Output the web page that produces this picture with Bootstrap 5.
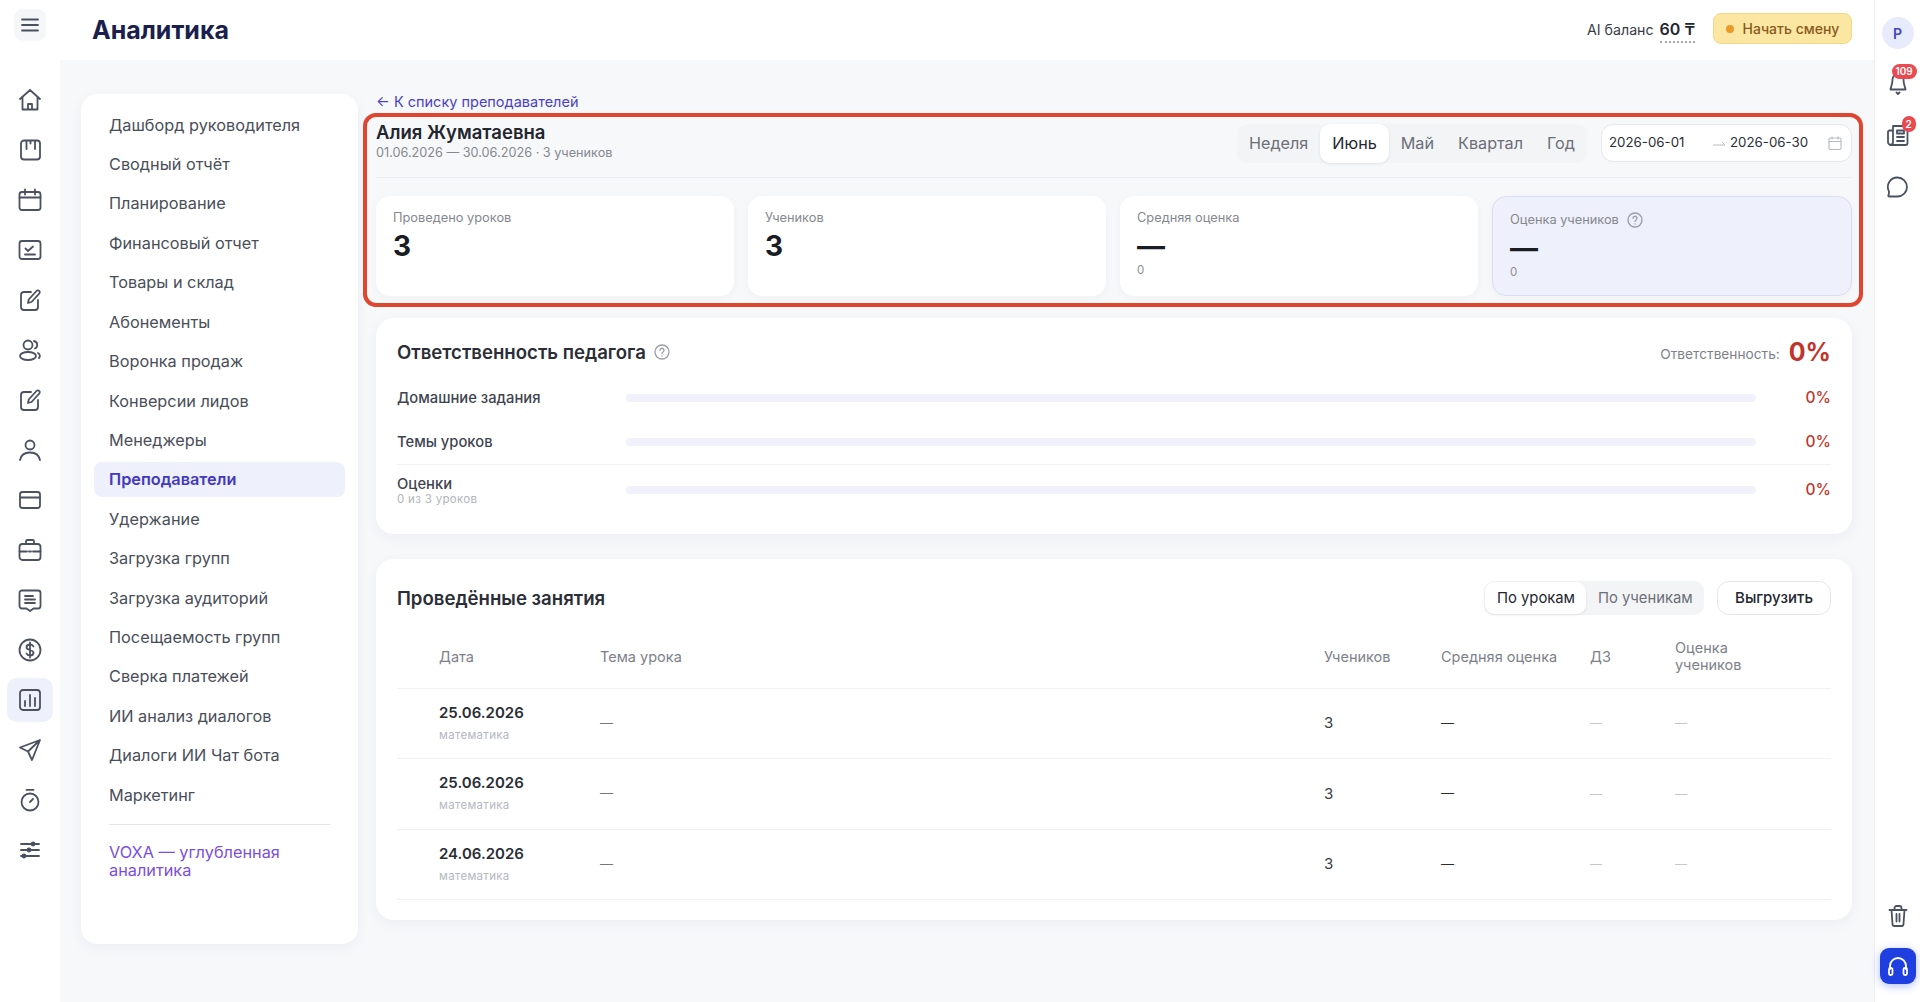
<!DOCTYPE html>
<html lang="ru">
<head>
  <meta charset="UTF-8">
  <meta name="viewport" content="width=device-width, initial-scale=1.0">
  <title>Аналитика</title>
  <link href="https://cdn.jsdelivr.net/npm/bootstrap@5.3.0/dist/css/bootstrap.min.css" rel="stylesheet">
  <style>
    html, body {
      height: 100%;
    }
    body {
      font-family: Inter, "Noto Sans", sans-serif;
      background: #fff;
      color: #23262f;
      overflow: hidden;
    }
    .app-shell {
      height: 1002px;
    }

    /* left rail */
    .rail-left {
      width: 60px;
      flex: none;
      background: #fff;
      padding-top: 10px;
    }
    .burger-box {
      width: 30px;
      height: 30px;
      background: #f5f6f8;
      border-radius: 8px;
      box-shadow: 0 0 2px rgba(30, 40, 70, .12);
    }
    .rail-nav {
      margin-top: 35px;
    }
    .rail-cell {
      width: 46px;
      height: 50px;
    }
    .rail-cell.is-on > span {
      background: #eef0fb;
      border-radius: 10px;
      width: 46px;
      height: 44px;
    }
    .rail-ico {
      width: 24px;
      height: 24px;
      fill: none;
      stroke: #4a5160;
      stroke-width: 1.8;
      stroke-linecap: round;
      stroke-linejoin: round;
    }

    /* header */
    .top-bar {
      height: 60px;
      flex: none;
      padding: 0 22px 0 32px;
    }
    .page-title {
      font-size: 25px;
      font-weight: 700;
      color: #1b1f4d;
      margin: 0;
    }
    .top-actions {
      margin-bottom: 3px;
    }
    .ai-balance {
      font-size: 14.2px;
      color: #3a3d46;
    }
    .ai-balance b {
      font-size: 16px;
      font-weight: 600;
      color: #23262f;
      border-bottom: 2px dotted #a5a8ae;
      padding-bottom: 2px;
      margin-left: 2px;
    }
    .shift-btn {
      height: 31px;
      width: 139px;
      margin-left: 18px;
      padding: 0;
      background: #fbe6a2;
      border: 1px solid #f2d88a;
      border-radius: 8px;
      color: #8a5a1c;
      font-size: 14px;
      font-weight: 500;
    }
    .shift-dot {
      width: 8px;
      height: 8px;
      border-radius: 50%;
      background: #eb9a2a;
      margin-right: 9px;
    }

    /* workspace */
    .work-area {
      background: #f7f8fa;
      min-height: 0;
    }
    .side-menu {
      width: 277px;
      height: 850px;
      flex: none;
      margin: 34px 18px 0 21px;
      padding: 13.4px 13px 13px;
      background: #fff;
      border-radius: 16px;
      box-shadow: 0 4px 14px rgba(30, 40, 70, .05);
    }
    .side-link {
      height: 35px;
      margin-bottom: 4.42px;
      padding: 0 15px;
      font-size: 16.3px;
      color: #4a4e58;
      border-radius: 8px;
      display: flex;
      align-items: center;
      text-decoration: none;
    }
    .side-link.is-on {
      background: #eef0fb;
      color: #4338c0;
      font-weight: 600;
    }
    .side-rule {
      margin: 12px 15px 19px;
      border-color: #e3e4e8;
      opacity: 1;
    }
    .side-extra {
      display: block;
      padding: 0 15px;
      font-size: 16.3px;
      line-height: 17.5px;
      color: #7a4fdb;
      text-decoration: none;
    }
    .main-col {
      width: 1476px;
      flex: none;
      padding-top: 33px;
    }
    .back-link {
      display: block;
      height: 18px;
      line-height: 18px;
      font-size: 14.5px;
      color: #4a42c4;
      text-decoration: none;
    }
    .focus-box {
      margin: 2px -11px 0 -13px;
      padding: 7px 7px 7px 9px;
      border: 4px solid #e0452f;
      border-radius: 13px;
    }
    .focus-head {
      padding-bottom: 14px;
      border-bottom: 1px solid #eceef1;
      height: 54px;
    }
    .teacher-name {
      font-size: 18.5px;
      line-height: 24px;
      font-weight: 600;
      color: #23262f;
      margin: -4px 0 0;
    }
    .teacher-sub {
      font-size: 12.7px;
      line-height: 16px;
      margin-top: 1px;
      color: #85888f;
    }
    .period-tabs {
      height: 39px;
      background: #f3f4f6;
      border-radius: 10px;
    }
    .period-tab {
      padding: 0 12px;
      font-size: 16.2px;
      line-height: 39px;
      color: #6b6f78;
    }
    .period-tab.is-on {
      background: #fff;
      color: #23262f;
      border-radius: 10px;
      box-shadow: 0 1px 3px rgba(30, 40, 70, .1);
    }
    .date-range {
      width: 251px;
      height: 38px;
      margin-left: 14px;
      padding: 0 7px;
      background: #fff;
      border: 1px solid #e6e7eb;
      border-radius: 12px;
      font-size: 13.3px;
      color: #2b2e36;
    }
    .date-from {
      width: 103px;
    }
    .date-to {
      width: 97px;
      margin-left: 4px;
    }
    .stat-row {
      margin-top: 18px;
      gap: 14px;
    }
    .stat-card {
      flex: 1 1 0;
      height: 100px;
      padding: 13px 17px;
      border: 0;
      border-radius: 14px;
      box-shadow: 0 2px 8px rgba(30, 40, 70, .04);
    }
    .stat-card.is-tinted {
      background: #eef0fb;
      border: 1px solid #dadef3;
      padding-top: 14px;
    }
    .stat-label {
      font-size: 12.8px;
      line-height: 17px;
      color: #85888f;
    }
    .stat-value {
      font-size: 28px;
      line-height: 34px;
      font-weight: 700;
      color: #1b1d26;
      margin-top: 3px;
    }
    .stat-note {
      font-size: 11.5px;
      line-height: 14px;
      color: #8c8f96;
    }
    .help-ico {
      width: 16px;
      height: 16px;
      fill: none;
      stroke: #9a9da5;
      stroke-width: 1.3;
      stroke-linecap: round;
    }
    .panel-card {
      border: 0;
      border-radius: 18px;
      background: #fff;
      box-shadow: 0 4px 14px rgba(30, 40, 70, .05);
      padding: 0 21px;
    }
    .duty-panel {
      height: 216px;
      margin-top: 11px;
      padding-top: 20px;
    }
    .panel-title {
      font-size: 18.6px;
      line-height: 28px;
      font-weight: 600;
      color: #2b2e36;
      margin: 0;
    }
    .duty-head {
      height: 38px;
    }
    .duty-total {
      font-size: 13.7px;
      color: #7e8189;
    }
    .duty-total span {
      margin-top: 5px;
    }
    .duty-total b {
      font-size: 25px;
      line-height: 28px;
      font-weight: 700;
      color: #c0362c;
      margin-left: 9px;
    }
    .duty-row {
      height: 44px;
    }
    .duty-row.is-last {
      height: 51px;
      border-top: 1px solid #f1f2f4;
    }
    .duty-label {
      width: 229px;
      flex: none;
      font-size: 14.75px;
      line-height: 18px;
      font-weight: 500;
      color: #3f4450;
    }
    .duty-label small {
      display: block;
      font-size: 11.5px;
      line-height: 13px;
      font-weight: 400;
      letter-spacing: .3px;
      color: #b2b5bc;
    }
    .duty-bar {
      height: 8px;
      background: #f0f1fb;
      flex: 1 1 0;
    }
    .duty-pct {
      width: 75px;
      flex: none;
      text-align: right;
      font-size: 15.5px;
      font-weight: 500;
      color: #c0362c;
    }
    .lessons-panel {
      height: 361px;
      margin-top: 25px;
      padding-top: 22px;
    }
    .mode-switch {
      height: 34px;
      width: 220px;
      padding: 1px;
      background: #f3f4f6;
      border-radius: 10px;
    }
    .mode-item {
      padding: 0 12px;
      font-size: 14.8px;
      line-height: 32px;
      color: #6b6f78;
      white-space: nowrap;
    }
    .mode-item.is-on {
      width: 101px;
      background: #fff;
      color: #23262f;
      border-radius: 9px;
      box-shadow: 0 1px 3px rgba(30, 40, 70, .1);
    }
    .export-btn {
      width: 114px;
      height: 34px;
      margin-left: 13px;
      padding: 0;
      background: #fff;
      border: 1px solid #e6e7eb;
      border-radius: 12px;
      font-size: 15px;
      font-weight: 500;
      color: #23262f;
    }
    .lesson-table {
      table-layout: fixed;
      margin: 12px 0 0;
      font-size: 15px;
    }
    .lesson-table col:nth-child(1) { width: 203px; }
    .lesson-table col:nth-child(3) { width: 117px; }
    .lesson-table col:nth-child(4) { width: 149px; }
    .lesson-table col:nth-child(5) { width: 85px; }
    .lesson-table col:nth-child(6) { width: 156px; }
    .lesson-table th {
      height: 61px;
      padding: 0 0 2px;
      vertical-align: middle;
      font-size: 14.5px;
      line-height: 17px;
      font-weight: 400;
      color: #7e8189;
      border-bottom: 1px solid #f1f2f4;
    }
    .lesson-table td {
      height: 70.5px;
      padding: 0;
      vertical-align: middle;
      color: #3a3d46;
      border-bottom: 1px solid #eff0f3;
    }
    .lesson-table th:first-child,
    .lesson-table td:first-child {
      padding-left: 42px;
    }
    .lesson-table th:last-child {
      padding-right: 70px;
    }
    .lesson-date {
      font-weight: 600;
      line-height: 20px;
      color: #2a2d36;
      margin-top: -1px;
    }
    .lesson-sub {
      font-size: 11.5px;
      line-height: 15px;
      margin-top: 5px;
      letter-spacing: .3px;
      color: #b5b8bf;
    }
    .lesson-table td.dash-soft { color: #73767e; font-size: 13px; }
    .lesson-table td.dash-dark { color: #2a2d36; font-size: 13px; }
    .lesson-table td.dash-pale { color: #c4c6cc; font-size: 12px; }

    /* right rail */
    .rail-right {
      width: 46px;
      flex: none;
      background: #fff;
      border-left: 1px solid #eceef1;
      padding: 17px 0 18px;
    }
    .avatar-dot {
      width: 32px;
      height: 32px;
      border-radius: 50%;
      background: #e8ebfb;
      color: #4045c4;
      font-size: 14px;
      font-weight: 600;
    }
    .right-cell {
      height: 24px;
      width: 24px;
      margin-top: 28px;
    }
    .right-cell.is-first {
      margin-top: 20px;
    }
    .right-cell.is-bottom {
      margin-top: auto;
    }
    .count-badge {
      top: -5.5px;
      left: 6px;
      padding: 0 4px;
      min-width: 14px;
      font-size: 10px;
      line-height: 15px;
      font-weight: 600;
      background: #ea4a4f;
      border-radius: 8px;
    }
    .count-badge.is-one {
      left: 16px;
      padding: 0 3px;
      line-height: 16px;
    }
    .help-desk {
      width: 36px;
      height: 36px;
      margin-top: 22px;
      background: #1f3fe0;
      border-radius: 9px;
      box-shadow: 0 2px 8px rgba(31, 63, 224, .35);
    }
  </style>
</head>
<body>
  <div class="app-shell d-flex">
    <!-- Left rail -->
    <aside class="rail-left d-flex flex-column align-items-center">
      <div class="burger-box d-flex align-items-center justify-content-center">
        <svg class="rail-ico" viewBox="0 0 24 24"><path d="M4 6.500h16M4 12h16M4 17.500h16"/></svg>
      </div>
      <nav class="rail-nav">
        <div class="rail-cell d-flex align-items-center justify-content-center"><svg class="rail-ico" viewBox="0 0 24 24"><path d="M2 11 12 2l10 9M4.500 9v12.500h15V9M10 21.500V16h4v5.500"/></svg></div>
        <div class="rail-cell d-flex align-items-center justify-content-center"><svg class="rail-ico" viewBox="0 0 24 24"><rect x="3" y="2.500" width="19" height="19" rx="3"/><path d="M8.500 3v8M12.500 3v2.500M17 3v8"/></svg></div>
        <div class="rail-cell d-flex align-items-center justify-content-center"><svg class="rail-ico" viewBox="0 0 24 24"><rect x="1.500" y="4" width="21" height="18" rx="2.500"/><path d="M1.500 9.500h21M7 1.500v5M17 1.500v5"/></svg></div>
        <div class="rail-cell d-flex align-items-center justify-content-center"><svg class="rail-ico" viewBox="0 0 24 24"><rect x="1.500" y="3" width="21" height="18" rx="2.500"/><path d="m7.500 10.500 2.500 2.500 5-4.500M7 16.500h10"/></svg></div>
        <div class="rail-cell d-flex align-items-center justify-content-center"><svg class="rail-ico" viewBox="0 0 24 24"><path d="M13 4H6a3 3 0 0 0-3 3v12a3 3 0 0 0 3 3h11a3 3 0 0 0 3-3v-7"/><path d="m10 15 .7-3.500L18.500 3a1.700 1.700 0 0 1 2.800 2.500L13.500 14z"/></svg></div>
        <div class="rail-cell d-flex align-items-center justify-content-center"><svg class="rail-ico" viewBox="0 0 24 24"><circle cx="10" cy="7" r="4.500"/><ellipse cx="10" cy="18" rx="8" ry="4"/><path d="M16 3a4 4 0 0 1 1 7.500M20 15c2 1 2.500 3.500 1 5"/></svg></div>
        <div class="rail-cell d-flex align-items-center justify-content-center"><svg class="rail-ico" viewBox="0 0 24 24"><path d="M13 4H6a3 3 0 0 0-3 3v12a3 3 0 0 0 3 3h11a3 3 0 0 0 3-3v-7"/><path d="m10 15 .7-3.500L18.500 3a1.700 1.700 0 0 1 2.800 2.500L13.500 14z"/></svg></div>
        <div class="rail-cell d-flex align-items-center justify-content-center"><svg class="rail-ico" viewBox="0 0 24 24"><circle cx="12" cy="7" r="4.500"/><path d="M2 22c1-5 5-7.500 10-7.500S21 17 22 22"/></svg></div>
        <div class="rail-cell d-flex align-items-center justify-content-center"><svg class="rail-ico" viewBox="0 0 24 24"><rect x="2" y="4" width="20" height="16" rx="2.500"/><path d="M2 9.500h20"/></svg></div>
        <div class="rail-cell d-flex align-items-center justify-content-center"><svg class="rail-ico" viewBox="0 0 24 24"><rect x="1.500" y="6" width="21" height="16" rx="3"/><path d="M8 6V3.500A1.500 1.500 0 0 1 9.500 2h5A1.500 1.500 0 0 1 16 3.500V6M1.500 13.500H9M15 13.500h7.500M11 13.500h2"/></svg></div>
        <div class="rail-cell d-flex align-items-center justify-content-center"><svg class="rail-ico" viewBox="0 0 24 24"><path d="M4 2.500h16A2.500 2.500 0 0 1 22.500 5v13a2.500 2.500 0 0 1-2.500 2.500h-4.500L12 23l-3.500-2.500H4A2.500 2.500 0 0 1 1.500 18V5A2.500 2.500 0 0 1 4 2.500z"/><path d="M7 8h8M7 11.500h10M7 15h10"/></svg></div>
        <div class="rail-cell d-flex align-items-center justify-content-center"><svg class="rail-ico" viewBox="0 0 24 24"><circle cx="12" cy="12" r="10.500"/><path d="M15.500 8.500c-.5-1.200-2-2-3.500-2-2 0-3.500 1-3.500 2.700 0 3.800 7 1.800 7 5.600 0 1.700-1.500 2.700-3.500 2.700-1.600 0-3-.8-3.500-2M12 4.500v15"/></svg></div>
        <div class="rail-cell is-on d-flex align-items-center"><span class="d-flex align-items-center justify-content-center"><svg class="rail-ico" viewBox="0 0 24 24"><rect x="2" y="2" width="20" height="20" rx="3"/><path d="M7 18v-5M12 18V7M17 18v-8"/></svg></span></div>
        <div class="rail-cell d-flex align-items-center justify-content-center"><svg class="rail-ico" viewBox="0 0 24 24"><path d="M22 2 2 9.500l8 4 4 8.500zM10 13.500 22 2"/></svg></div>
        <div class="rail-cell d-flex align-items-center justify-content-center"><svg class="rail-ico" viewBox="0 0 24 24"><circle cx="12" cy="14" r="8.500"/><path d="M8.500 1.800h7M12 14l3-3"/></svg></div>
        <div class="rail-cell d-flex align-items-center justify-content-center"><svg class="rail-ico" viewBox="0 0 24 24"><path d="M3 6h18M3 12h18M3 18h18"/><circle cx="15" cy="6" r="1.500" fill="#4a5160"/><circle cx="11" cy="12" r="1.500" fill="#4a5160"/><circle cx="6" cy="18" r="1.500" fill="#4a5160"/></svg></div>
      </nav>
    </aside>

    <div class="flex-grow-1 d-flex flex-column">
      <!-- Header -->
      <header class="top-bar d-flex align-items-center justify-content-between bg-white">
        <h1 class="page-title">Аналитика</h1>
        <div class="top-actions d-flex align-items-center">
          <span class="ai-balance">AI баланс <b>60 ₸</b></span>
          <button class="btn shift-btn d-flex align-items-center justify-content-center" type="button"><span class="shift-dot"></span>Начать смену</button>
        </div>
      </header>

      <!-- Workspace -->
      <div class="work-area flex-grow-1 d-flex">
        <nav class="side-menu">
          <a class="side-link" href="#">Дашборд руководителя</a>
          <a class="side-link" href="#">Сводный отчёт</a>
          <a class="side-link" href="#">Планирование</a>
          <a class="side-link" href="#">Финансовый отчет</a>
          <a class="side-link" href="#">Товары и склад</a>
          <a class="side-link" href="#">Абонементы</a>
          <a class="side-link" href="#">Воронка продаж</a>
          <a class="side-link" href="#">Конверсии лидов</a>
          <a class="side-link" href="#">Менеджеры</a>
          <a class="side-link is-on" href="#">Преподаватели</a>
          <a class="side-link" href="#">Удержание</a>
          <a class="side-link" href="#">Загрузка групп</a>
          <a class="side-link" href="#">Загрузка аудиторий</a>
          <a class="side-link" href="#">Посещаемость групп</a>
          <a class="side-link" href="#">Сверка платежей</a>
          <a class="side-link" href="#">ИИ анализ диалогов</a>
          <a class="side-link" href="#">Диалоги ИИ Чат бота</a>
          <a class="side-link" href="#">Маркетинг</a>
          <hr class="side-rule">
          <a class="side-extra" href="#">VOXA — углубленная аналитика</a>
        </nav>

        <main class="main-col">
          <a class="back-link" href="#">← К списку преподавателей</a>

          <section class="focus-box">
            <div class="focus-head d-flex justify-content-between align-items-start">
              <div>
                <h2 class="teacher-name">Алия Жуматаевна</h2>
                <div class="teacher-sub">01.06.2026 — 30.06.2026 · 3 учеников</div>
              </div>
              <div class="d-flex align-items-start">
                <div class="period-tabs d-flex">
                  <span class="period-tab">Неделя</span>
                  <span class="period-tab is-on">Июнь</span>
                  <span class="period-tab">Май</span>
                  <span class="period-tab">Квартал</span>
                  <span class="period-tab">Год</span>
                </div>
                <div class="date-range d-flex align-items-center">
                  <span class="date-from">2026-06-01</span>
                  <svg width="14" height="8" viewBox="0 0 14 8" fill="none" stroke="#b9bcc3" stroke-width="1"><path d="M1 6h12L10 3"/></svg>
                  <span class="date-to">2026-06-30</span>
                  <svg width="16" height="16" viewBox="0 0 16 16" fill="none" stroke="#b9bcc3" stroke-width="1.200"><rect x="2" y="3" width="12" height="11.500" rx="1.500"/><path d="M2 6.500h12M5 1.500v3M11 1.500v3"/></svg>
                </div>
              </div>
            </div>

            <div class="stat-row d-flex">
              <div class="card stat-card">
                <div class="stat-label">Проведено уроков</div>
                <div class="stat-value">3</div>
              </div>
              <div class="card stat-card">
                <div class="stat-label">Учеников</div>
                <div class="stat-value">3</div>
              </div>
              <div class="card stat-card">
                <div class="stat-label">Средняя оценка</div>
                <div class="stat-value">—</div>
                <div class="stat-note">0</div>
              </div>
              <div class="card stat-card is-tinted">
                <div class="stat-label d-flex align-items-center gap-2">Оценка учеников
                  <svg class="help-ico" viewBox="0 0 16 16"><circle cx="8" cy="8" r="7"/><path d="M6 6.300a2 2 0 1 1 3 1.700c-.7.400-1 .8-1 1.600M8 12v.100"/></svg>
                </div>
                <div class="stat-value">—</div>
                <div class="stat-note">0</div>
              </div>
            </div>
          </section>

          <section class="card panel-card duty-panel">
            <div class="duty-head d-flex justify-content-between align-items-start">
              <h3 class="panel-title d-flex align-items-center gap-2">Ответственность педагога
                <svg class="help-ico" viewBox="0 0 16 16"><circle cx="8" cy="8" r="7"/><path d="M6 6.300a2 2 0 1 1 3 1.700c-.7.400-1 .8-1 1.600M8 12v.100"/></svg>
              </h3>
              <div class="duty-total d-flex align-items-center"><span>Ответственность:</span> <b>0%</b></div>
            </div>
            <div class="duty-row d-flex align-items-center">
              <div class="duty-label">Домашние задания</div>
              <div class="progress duty-bar"></div>
              <div class="duty-pct">0%</div>
            </div>
            <div class="duty-row d-flex align-items-center">
              <div class="duty-label">Темы уроков</div>
              <div class="progress duty-bar"></div>
              <div class="duty-pct">0%</div>
            </div>
            <div class="duty-row is-last d-flex align-items-center">
              <div class="duty-label">Оценки<small>0 из 3 уроков</small></div>
              <div class="progress duty-bar"></div>
              <div class="duty-pct">0%</div>
            </div>
          </section>

          <section class="card panel-card lessons-panel">
            <div class="d-flex justify-content-between align-items-center">
              <h3 class="panel-title">Проведённые занятия</h3>
              <div class="d-flex">
                <div class="mode-switch d-flex">
                  <span class="mode-item is-on">По урокам</span>
                  <span class="mode-item">По ученикам</span>
                </div>
                <button class="btn export-btn" type="button">Выгрузить</button>
              </div>
            </div>
            <table class="table lesson-table">
              <colgroup><col><col><col><col><col><col></colgroup>
              <thead>
                <tr>
                  <th>Дата</th>
                  <th>Тема урока</th>
                  <th>Учеников</th>
                  <th>Средняя оценка</th>
                  <th>ДЗ</th>
                  <th>Оценка учеников</th>
                </tr>
              </thead>
              <tbody>
                <tr>
                  <td><div class="lesson-date">25.06.2026</div><div class="lesson-sub">математика</div></td>
                  <td class="dash-soft">—</td>
                  <td>3</td>
                  <td class="dash-dark">—</td>
                  <td class="dash-pale">—</td>
                  <td class="dash-pale">—</td>
                </tr>
                <tr>
                  <td><div class="lesson-date">25.06.2026</div><div class="lesson-sub">математика</div></td>
                  <td class="dash-soft">—</td>
                  <td>3</td>
                  <td class="dash-dark">—</td>
                  <td class="dash-pale">—</td>
                  <td class="dash-pale">—</td>
                </tr>
                <tr>
                  <td><div class="lesson-date">24.06.2026</div><div class="lesson-sub">математика</div></td>
                  <td class="dash-soft">—</td>
                  <td>3</td>
                  <td class="dash-dark">—</td>
                  <td class="dash-pale">—</td>
                  <td class="dash-pale">—</td>
                </tr>
              </tbody>
            </table>
          </section>
        </main>
      </div>
    </div>

    <!-- Right rail -->
    <aside class="rail-right d-flex flex-column align-items-center">
      <div class="avatar-dot d-flex align-items-center justify-content-center">P</div>
      <div class="right-cell is-first position-relative">
        <svg class="rail-ico" viewBox="0 0 24 24"><path d="M12 3a5.500 5.500 0 0 0-5.500 5.500c0 6-2 8-2 10h15c0-2-2-4-2-10A5.500 5.500 0 0 0 12 3zM10.500 21.500l1.500 1.500 1.500-1.500"/></svg>
        <span class="badge count-badge position-absolute">109</span>
      </div>
      <div class="right-cell position-relative">
        <svg class="rail-ico" viewBox="0 0 24 24"><path d="M7 3h13a1.500 1.500 0 0 1 1.500 1.500V20a2 2 0 0 1-2 2H5a3 3 0 0 1-3-3V9a1.500 1.500 0 0 1 1.500-1.500H7zM7 3v16a3 3 0 0 1-3 3M11 7.500h7v3h-7zM11 14h7M11 18h7"/></svg>
        <span class="badge count-badge is-one position-absolute">2</span>
      </div>
      <div class="right-cell">
        <svg class="rail-ico" viewBox="0 0 24 24"><path d="M11.500 2.500a9.500 9.500 0 0 1 0 19H3.500c-1 0-1.500-.5-1-1.500.5-1 .5-2.500.5-3.500a9.500 9.500 0 0 1 8.500-14z"/></svg>
      </div>
      <div class="right-cell is-bottom">
        <svg class="rail-ico" viewBox="0 0 24 24"><path d="M3.500 6h17M8.500 6V4a2 2 0 0 1 2-2h3a2 2 0 0 1 2 2v2M5.500 6l1 14a2 2 0 0 0 2 2h7a2 2 0 0 0 2-2l1-14M10.500 10v7.500M13.500 10v7.500"/></svg>
      </div>
      <div class="help-desk d-flex align-items-center justify-content-center">
        <svg width="24" height="24" viewBox="0 0 24 24" fill="none" stroke="#fff" stroke-width="1.800" stroke-linecap="round" stroke-linejoin="round"><path d="M4 15v-3a8 8 0 0 1 16 0v3"/><rect x="3" y="14" width="3.500" height="7" rx="1.500"/><rect x="17.500" y="14" width="3.500" height="7" rx="1.500"/></svg>
      </div>
    </aside>
  </div>

  <script src="https://cdn.jsdelivr.net/npm/bootstrap@5.3.0/dist/js/bootstrap.bundle.min.js"></script>
</body>
</html>
